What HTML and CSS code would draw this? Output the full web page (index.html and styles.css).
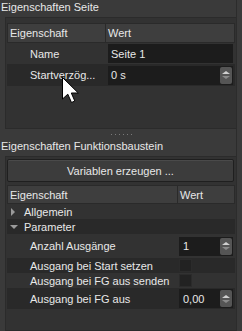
FILE: index.html
```html
<!DOCTYPE html>
<html lang="de">
  <head>
    <meta charset="UTF-8" />
    <title>Eigenschaften</title>
    <link rel="stylesheet" href="styles.css">
  </head>
  <body>
    <div class="page">
      <div class="sec-title">Eigenschaften Seite</div>
      <div class="frame frame-page">
        <div class="tbl tbl-page">
          <div class="head"><span class="c1">Eigenschaft</span><span class="c2">Wert</span></div>
          <div class="row r-name">
            <span class="c1 child">Name</span>
            <span class="c2"><span class="field">Seite 1</span></span>
          </div>
          <div class="row alt r-start">
            <span class="c1 child">Startverzög...</span>
            <span class="c2"><span class="field">0 s<span class="spin"><i class="up"></i><i class="dn"></i></span></span></span>
          </div>
        </div>
      </div>

      <div class="splitter"><i></i><i></i><i></i><i></i><i></i><i></i></div>

      <div class="sec-title">Eigenschaften Funktionsbaustein</div>
      <div class="frame frame-block">
        <button class="btn">Variablen erzeugen ...</button>
        <div class="tbl tbl-block">
          <div class="head"><span class="c1">Eigenschaft</span><span class="c2">Wert</span></div>
          <div class="row r-grp">
            <span class="c1 group"><span class="tri tri-right"></span>Allgemein</span>
          </div>
          <div class="row alt r-grp">
            <span class="c1 group"><span class="tri tri-down"></span>Parameter</span>
          </div>
          <div class="row r-spin">
            <span class="c1 child">Anzahl Ausgänge</span>
            <span class="c2"><span class="field">1<span class="spin"><i class="up"></i><i class="dn"></i></span></span></span>
          </div>
          <div class="row alt r-check">
            <span class="c1 child">Ausgang bei Start setzen</span>
            <span class="c2"><span class="check"></span></span>
          </div>
          <div class="row r-check">
            <span class="c1 child">Ausgang bei FG aus senden</span>
            <span class="c2"><span class="check"></span></span>
          </div>
          <div class="row alt r-last">
            <span class="c1 child">Ausgang bei FG aus</span>
            <span class="c2"><span class="field">0,00<span class="spin"><i class="up"></i><i class="dn"></i></span></span></span>
          </div>
        </div>
      </div>
    </div>

    <svg class="cursor" width="18" height="27" viewBox="0 0 18 27">
      <path d="M0.5 0.5 L0.5 22 L5.8 17.2 L9.5 25.5 L12.8 24 L9.3 16 L16.3 16 Z" fill="#fff" stroke="#000" stroke-width="1"/>
    </svg>
  </body>
</html>
```

FILE: styles.css
```css
* {
  margin: 0;
  padding: 0;
  box-sizing: border-box;
  font-family: 'Liberation Sans', Arial, sans-serif;
}
body {
  width: 242px;
  height: 331px;
  overflow: hidden;
  background: #3a3a3a;
  color: #e8e8e8;
  font-size: 11px;
  position: relative;
}
.page {
  width: 237px;
  height: 331px;
  border-right: 1px solid #2c2c2c;
  display: flex;
  flex-direction: column;
}
.sec-title {
  height: 17px;
  line-height: 14px;
  padding-left: 1px;
  flex-shrink: 0;
}
.frame {
  margin-left: 5px;
  border: 1px solid #2b2b2b;
  border-right: none;
  background: #323232;
  display: flex;
  flex-direction: column;
}
.frame-page {
  height: 112px;
  padding: 5px 1px 0 1px;
}
.frame-block {
  flex: 1;
  padding: 2px 2px 0 1px;
}
.splitter {
  height: 10px;
  display: flex;
  justify-content: center;
  align-items: center;
  gap: 2px;
  padding-left: 8px;
}
.splitter i {
  width: 1px;
  height: 1px;
  background: #7a7a7a;
  margin-right: 1px;
}
.btn {
  height: 23px;
  width: 227px;
  border: 1px solid #1f1f1f;
  border-radius: 2px;
  background: #3c3c3c;
  box-shadow: inset 0 1px 0 #4a4a4a;
  color: #e8e8e8;
  font-size: 11px;
  margin-bottom: 3px;
}
.tbl {
  display: flex;
  flex-direction: column;
  width: 228px;
}
.head {
  display: flex;
  height: 20px;
  background: #3e3e3e;
  border: 1px solid #2a2a2a;
  align-items: stretch;
}
.tbl-block .head {
  height: 19px;
}
.head span {
  display: flex;
  align-items: center;
  padding-left: 2px;
}
.head .c1 {
  border-right: 1px solid #2a2a2a;
}
.tbl-page .c1 {
  width: 98px;
  flex-shrink: 0;
}
.tbl-block .c1 {
  width: 170px;
  flex-shrink: 0;
}
.c2 {
  flex: 1;
  display: flex;
  align-items: center;
}
.row {
  display: flex;
  align-items: center;
  background: #323232;
}
.row.alt {
  background: #292929;
}
.r-name { height: 21px; }
.r-start { height: 22px; }
.r-grp { height: 15px; }
.r-spin { height: 24px; }
.r-check { height: 15px; }
.r-last { height: 21px; }
.child {
  padding-left: 23px;
  white-space: nowrap;
}
.group {
  display: flex;
  align-items: center;
  padding-left: 3px;
}
.tri {
  width: 0;
  height: 0;
}
.tri-right {
  border-top: 4px solid transparent;
  border-bottom: 4px solid transparent;
  border-left: 4px solid #9a9a9a;
  margin-left: 1px;
  margin-right: 9px;
}
.tri-down {
  border-left: 4px solid transparent;
  border-right: 4px solid transparent;
  border-top: 4px solid #9a9a9a;
  margin-right: 6px;
}
.field {
  position: relative;
  display: flex;
  align-items: center;
  background: #1c1c1c;
  height: 19px;
  flex: 1;
  margin-left: 3px;
  margin-right: 2px;
  padding-left: 3px;
}
.tbl-block .field {
  margin-left: 2px;
  padding-left: 4px;
}
.spin {
  position: absolute;
  right: 1px;
  top: 1px;
  bottom: 1px;
  width: 12px;
  background: #555;
  border-radius: 2px;
  display: flex;
  flex-direction: column;
  align-items: center;
  justify-content: center;
  gap: 2px;
}
.spin .up {
  border-left: 4px solid transparent;
  border-right: 4px solid transparent;
  border-bottom: 3px solid #d0d0d0;
}
.spin .dn {
  border-left: 4px solid transparent;
  border-right: 4px solid transparent;
  border-top: 3px solid #8a8a8a;
}
.check {
  width: 13px;
  height: 13px;
  margin-left: 2px;
  background: #222;
  border: 1px solid #2b2b2b;
}
.cursor {
  position: absolute;
  left: 62px;
  top: 77px;
}
```
